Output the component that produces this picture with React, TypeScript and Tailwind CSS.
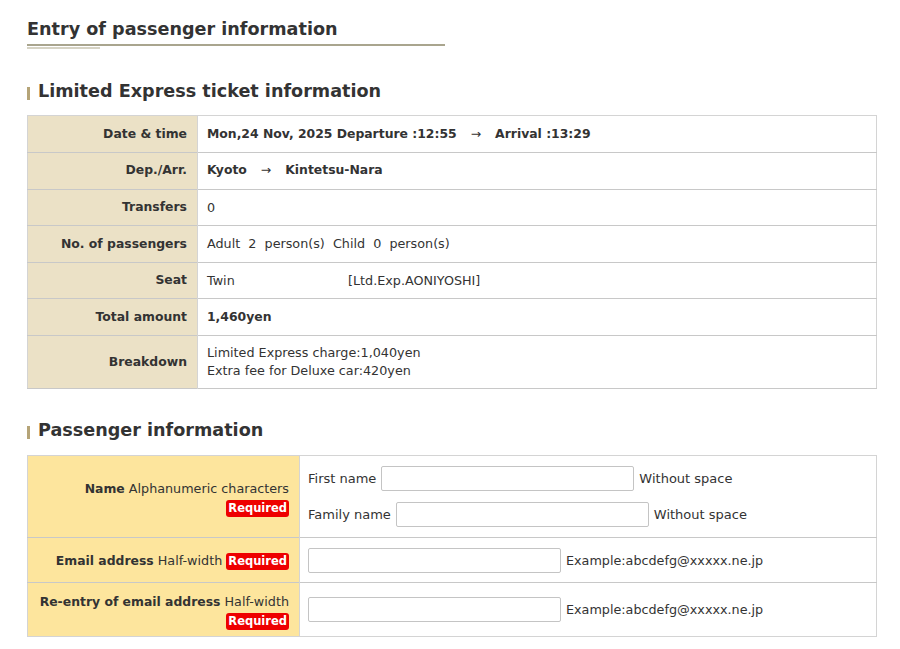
import React from 'react';

const ticketRows: { label: string; value: React.ReactNode; bold?: boolean }[] = [
  {
    label: 'Date & time',
    bold: true,
    value: (
      <>
        Mon,24 Nov, 2025 Departure :12:55<span className="px-[14px] font-normal">→</span>Arrival :13:29
      </>
    ),
  },
  {
    label: 'Dep./Arr.',
    bold: true,
    value: (
      <>
        Kyoto<span className="px-[14px] font-normal">→</span>Kintetsu-Nara
      </>
    ),
  },
  { label: 'Transfers', value: '0' },
  {
    label: 'No. of passengers',
    value: <span className="whitespace-pre">Adult  2  person(s)  Child  0  person(s)</span>,
  },
  {
    label: 'Seat',
    value: (
      <span className="flex">
        <span className="w-[141px]">Twin</span>
        <span>[Ltd.Exp.AONIYOSHI]</span>
      </span>
    ),
  },
  { label: 'Total amount', bold: true, value: '1,460yen' },
  {
    label: 'Breakdown',
    value: (
      <div className="leading-[18px] py-[8px]">
        <div>Limited Express charge:1,040yen</div>
        <div>Extra fee for Deluxe car:420yen</div>
      </div>
    ),
  },
];

function Required() {
  return (
    <span className="inline-block bg-[#ee0000] text-white font-bold text-[11.5px] leading-[17px] px-[2px] rounded-[3px] align-middle">
      Required
    </span>
  );
}

function SectionTitle({ children }: { children: React.ReactNode }) {
  return (
    <h3 className="flex items-center gap-[8px] text-[17.6px] font-bold text-[#333]">
      <span className="w-[3px] h-[13px] bg-[#b5a478] mt-[5px]" />
      {children}
    </h3>
  );
}

function TextInput({ className = '' }: { className?: string }) {
  return (
    <input
      type="text"
      className={`w-[253px] h-[25px] border border-[#c4c4c4] rounded-[2px] bg-white px-1 outline-none ${className}`}
    />
  );
}

export default function App() {
  return (
    <div className="min-h-screen bg-white text-[12.75px] text-[#333]" style={{ fontFamily: '"DejaVu Sans", Verdana, sans-serif' }}>
      <div className="pl-[27px] pr-[23px] pt-[17px]">
        <div className="w-[418px]">
          <h2 className="text-[17.6px] font-bold text-[#333] leading-[24px] pb-[3px]">Entry of passenger information</h2>
          <div className="h-[2px] bg-[#a9a58e]" />
          <div className="h-[2px] w-[73px] bg-[#d6d3c4] mt-[1px]" />
        </div>

        <div className="mt-[29px]">
          <SectionTitle>Limited Express ticket information</SectionTitle>
        </div>

        <table className="mt-[11px] w-full border-collapse border border-[#d4d4d4]">
          <tbody>
            {ticketRows.map((r) => (
              <tr key={r.label} className="border-b border-[#c8c8c8]">
                <th className="w-[170px] bg-[#ebe1c6] text-right font-bold text-[12.4px] pr-[10px] h-[36.6px] border-r border-[#d4d4d4]">
                  {r.label}
                </th>
                <td className={`pl-[9px] ${r.bold ? 'font-bold text-[12.4px]' : ''}`}>{r.value}</td>
              </tr>
            ))}
          </tbody>
        </table>

        <div className="mt-[28px]">
          <SectionTitle>Passenger information</SectionTitle>
        </div>

        <table className="mt-[12px] w-full border-collapse border border-[#d4d4d4]">
          <tbody>
            <tr className="border-b border-[#c8c8c8]">
              <th className="w-[272px] bg-[#fde59d] text-right font-normal pr-[10px] pt-[4px] h-[82px] border-r border-[#d4d4d4] leading-[18px]">
                <div>
                  <span className="font-bold text-[12.4px]">Name</span> Alphanumeric characters
                </div>
                <div className="mt-[1px]">
                  <Required />
                </div>
              </th>
              <td className="pl-[8px] text-[13px]">
                <div className="flex items-center gap-[5px]">
                  <span>First name</span>
                  <TextInput />
                  <span>Without space</span>
                </div>
                <div className="flex items-center gap-[5px] mt-[11px]">
                  <span>Family name</span>
                  <TextInput />
                  <span>Without space</span>
                </div>
              </td>
            </tr>
            <tr className="border-b border-[#c8c8c8]">
              <th className="bg-[#fde59d] text-right font-normal pr-[10px] h-[45px] border-r border-[#d4d4d4]">
                <span className="font-bold text-[12.4px]">Email address</span> Half-width <Required />
              </th>
              <td className="pl-[8px]">
                <div className="flex items-center gap-[5px]">
                  <TextInput />
                  <span>Example:abcdefg@xxxxx.ne.jp</span>
                </div>
              </td>
            </tr>
            <tr>
              <th className="bg-[#fde59d] text-right font-normal pr-[10px] pt-[3px] h-[54px] border-r border-[#d4d4d4] leading-[18px]">
                <div>
                  <span className="font-bold text-[12.4px]">Re-entry of email address</span> Half-width
                </div>
                <div className="mt-[1px]">
                  <Required />
                </div>
              </th>
              <td className="pl-[8px]">
                <div className="flex items-center gap-[5px]">
                  <TextInput />
                  <span>Example:abcdefg@xxxxx.ne.jp</span>
                </div>
              </td>
            </tr>
          </tbody>
        </table>
      </div>
    </div>
  );
}
